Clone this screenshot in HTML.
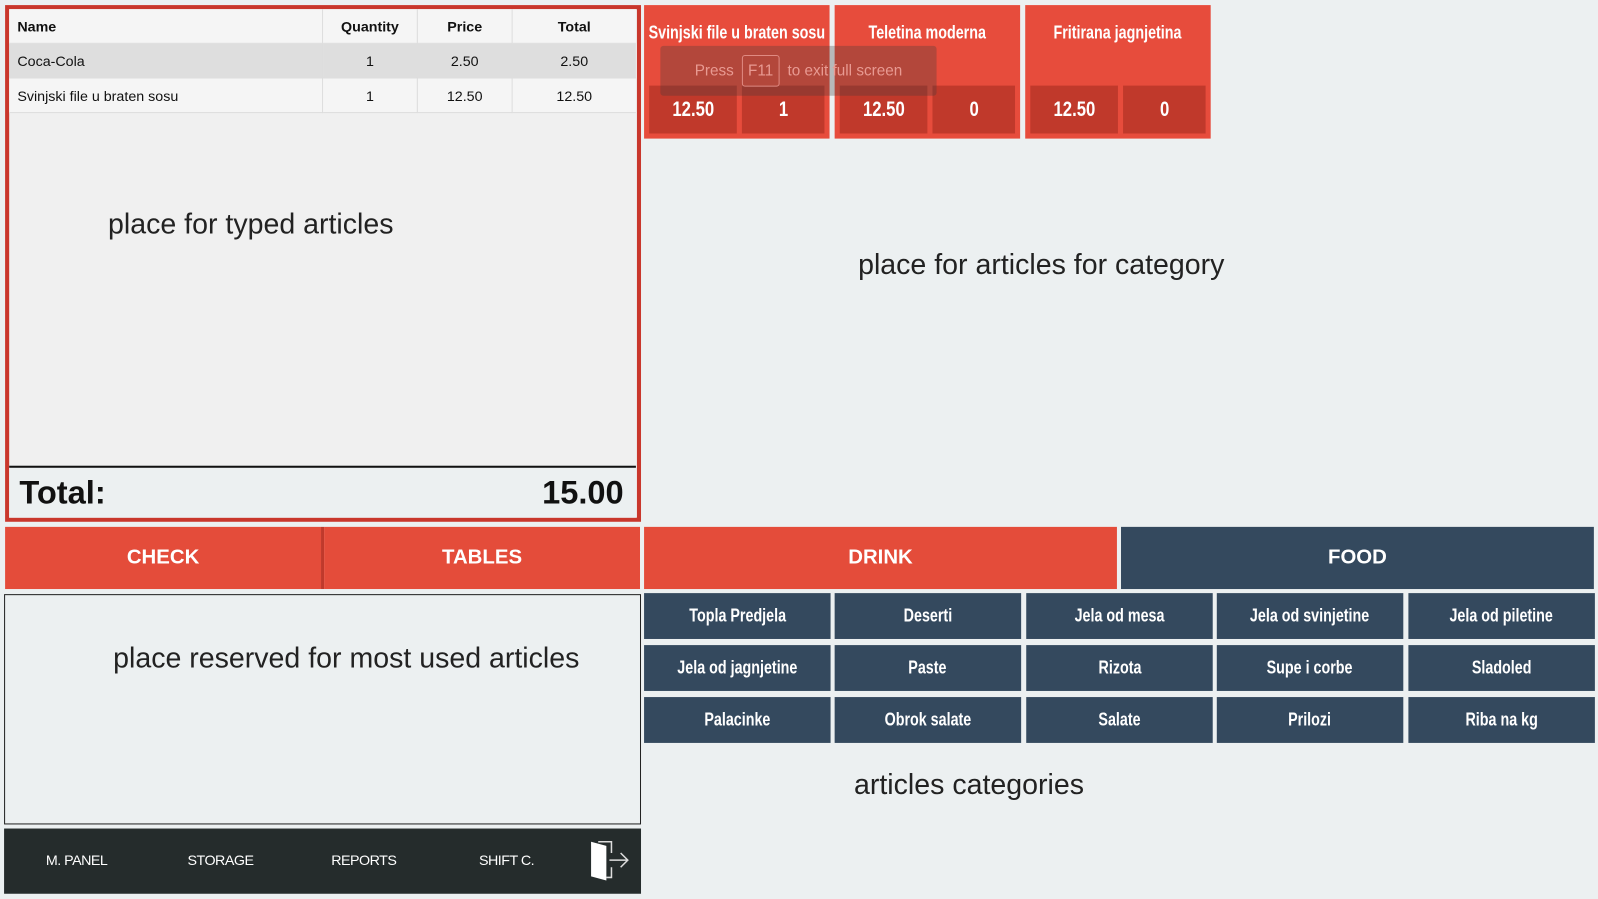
<!DOCTYPE html>
<html><head><meta charset="utf-8"><style>
body{margin:0;width:1598px;height:899px;background:#ecf0f1;font-family:"Liberation Sans",sans-serif;position:relative;overflow:hidden}
#w{position:absolute;left:0;top:0;width:1568px;height:882px;transform:scale(1.0191);transform-origin:0 0}
.a{position:absolute;box-sizing:border-box}
.n{font-family:"Liberation Sans",sans-serif;font-weight:bold;color:#fff;white-space:nowrap}
.n span{display:inline-block;transform:scaleX(0.78)}
.c{display:flex;align-items:center;justify-content:center}
table{border-collapse:collapse;font-size:14px;color:#111}
td,th{height:33px;padding:0 8px;border-right:1px solid #ddd;border-bottom:1px solid #ddd}
.big{font-size:28px;color:#222;font-family:"Liberation Sans",sans-serif}
.cat{background:#34495e;font-size:18px}
.tile{background:#e74c3c}
.in{background:#c0392b;font-size:21px}
</style></head><body><div id="w">
<div class="a" style="left:5px;top:5px;width:624px;height:507px;border:4px solid #c9372c;background:#f0f0f0"></div>
<div class="a" style="left:9px;top:9px;width:615px">
<table style="width:615px">
<tr style="background:#f5f5f5"><th style="text-align:left;width:291px">Name</th><th style="width:76px">Quantity</th><th style="width:76px">Price</th><th style="border-right:none">Total</th></tr>
<tr style="background:#dedede"><td>Coca-Cola</td><td style="text-align:center">1</td><td style="text-align:center">2.50</td><td style="text-align:center;border-right:none">2.50</td></tr>
<tr style="background:#f5f5f5"><td>Svinjski file u braten sosu</td><td style="text-align:center">1</td><td style="text-align:center">12.50</td><td style="text-align:center;border-right:none">12.50</td></tr>
</table></div>
<div class="a big" style="left:106px;top:204px">place for typed articles</div>
<div class="a" style="left:9px;top:457px;width:615px;height:51px;border-top:2px solid #111;background:#ecf0f1;font-weight:bold;font-size:32px;color:#111;display:flex;justify-content:space-between;align-items:center;padding:0 12px 0 10px">
<span>Total:</span><span>15.00</span></div>

<div class="a tile" style="left:632px;top:5px;width:182px;height:131px"></div>
<div class="a tile" style="left:819px;top:5px;width:182px;height:131px"></div>
<div class="a tile" style="left:1006px;top:5px;width:182px;height:131px"></div>
<div class="a n c" style="left:622px;top:18px;width:202px;height:28px;font-size:18px"><span>Svinjski file u braten sosu</span></div>
<div class="a n c" style="left:819px;top:18px;width:182px;height:28px;font-size:18px"><span>Teletina moderna</span></div>
<div class="a n c" style="left:1006px;top:18px;width:182px;height:28px;font-size:18px"><span>Fritirana jagnjetina</span></div>
<div class="a n c in" style="left:637px;top:84px;width:86px;height:47px"><span>12.50</span></div>
<div class="a n c in" style="left:728px;top:84px;width:81px;height:47px"><span>1</span></div>
<div class="a n c in" style="left:824px;top:84px;width:86px;height:47px"><span>12.50</span></div>
<div class="a n c in" style="left:915px;top:84px;width:81px;height:47px"><span>0</span></div>
<div class="a n c in" style="left:1011px;top:84px;width:86px;height:47px"><span>12.50</span></div>
<div class="a n c in" style="left:1102px;top:84px;width:81px;height:47px"><span>0</span></div>
<div class="a c" style="left:648px;top:45px;width:271px;height:49px;background:rgba(60,60,60,0.3);border-radius:3px;color:#e89a92;font-size:15px">Press <span style="border:1px solid #e08a82;border-radius:3px;padding:6px 5px;margin:0 8px">F11</span> to exit full screen</div>
<div class="a big" style="left:842px;top:244px">place for articles for category</div>

<div class="a c" style="left:5px;top:517px;width:310px;height:61px;background:#e44c3a;font-size:20px;font-weight:bold;color:#fff">CHECK</div>
<div class="a" style="left:315px;top:517px;width:3px;height:61px;background:#c0392b"></div>
<div class="a c" style="left:318px;top:517px;width:310px;height:61px;background:#e44c3a;font-size:20px;font-weight:bold;color:#fff">TABLES</div>
<div class="a c" style="left:632px;top:517px;width:464px;height:61px;background:#e44c3a;font-size:20px;font-weight:bold;color:#fff">DRINK</div>
<div class="a c" style="left:1100px;top:517px;width:464px;height:61px;background:#34495e;font-size:20px;font-weight:bold;color:#fff">FOOD</div>

<div class="a n c cat" style="left:632px;top:582px;width:183px;height:45px"><span>Topla Predjela</span></div>
<div class="a n c cat" style="left:819px;top:582px;width:183px;height:45px"><span>Deserti</span></div>
<div class="a n c cat" style="left:1007px;top:582px;width:183px;height:45px"><span>Jela od mesa</span></div>
<div class="a n c cat" style="left:1194px;top:582px;width:183px;height:45px"><span>Jela od svinjetine</span></div>
<div class="a n c cat" style="left:1382px;top:582px;width:183px;height:45px"><span>Jela od piletine</span></div>
<div class="a n c cat" style="left:632px;top:633px;width:183px;height:45px"><span>Jela od jagnjetine</span></div>
<div class="a n c cat" style="left:819px;top:633px;width:183px;height:45px"><span>Paste</span></div>
<div class="a n c cat" style="left:1007px;top:633px;width:183px;height:45px"><span>Rizota</span></div>
<div class="a n c cat" style="left:1194px;top:633px;width:183px;height:45px"><span>Supe i corbe</span></div>
<div class="a n c cat" style="left:1382px;top:633px;width:183px;height:45px"><span>Sladoled</span></div>
<div class="a n c cat" style="left:632px;top:684px;width:183px;height:45px"><span>Palacinke</span></div>
<div class="a n c cat" style="left:819px;top:684px;width:183px;height:45px"><span>Obrok salate</span></div>
<div class="a n c cat" style="left:1007px;top:684px;width:183px;height:45px"><span>Salate</span></div>
<div class="a n c cat" style="left:1194px;top:684px;width:183px;height:45px"><span>Prilozi</span></div>
<div class="a n c cat" style="left:1382px;top:684px;width:183px;height:45px"><span>Riba na kg</span></div>
<div class="a big" style="left:838px;top:754px">articles categories</div>

<div class="a" style="left:4px;top:583px;width:625px;height:226px;border:1px solid #222;background:#ecf0f1"></div>
<div class="a big" style="left:111px;top:630px">place reserved for most used articles</div>

<div class="a" style="left:4px;top:813px;width:625px;height:64px;background:#252c2c;color:#fff;font-size:14px;letter-spacing:-0.5px">
<span class="a" style="left:41px;top:23px">M. PANEL</span>
<span class="a" style="left:180px;top:23px">STORAGE</span>
<span class="a" style="left:321px;top:23px">REPORTS</span>
<span class="a" style="left:466px;top:23px">SHIFT C.</span>
<svg class="a" style="left:574px;top:10px" width="40" height="44" viewBox="0 0 40 44"><path d="M9 3H22V14M22 28V38H17" fill="none" stroke="#ddd" stroke-width="1.5"/><path d="M2 3L17 7V41L2 37Z" fill="#fff"/><path d="M20 21H37M31 14L38 21L31 28" fill="none" stroke="#ddd" stroke-width="1.5"/></svg>
</div>
</div></body></html>
